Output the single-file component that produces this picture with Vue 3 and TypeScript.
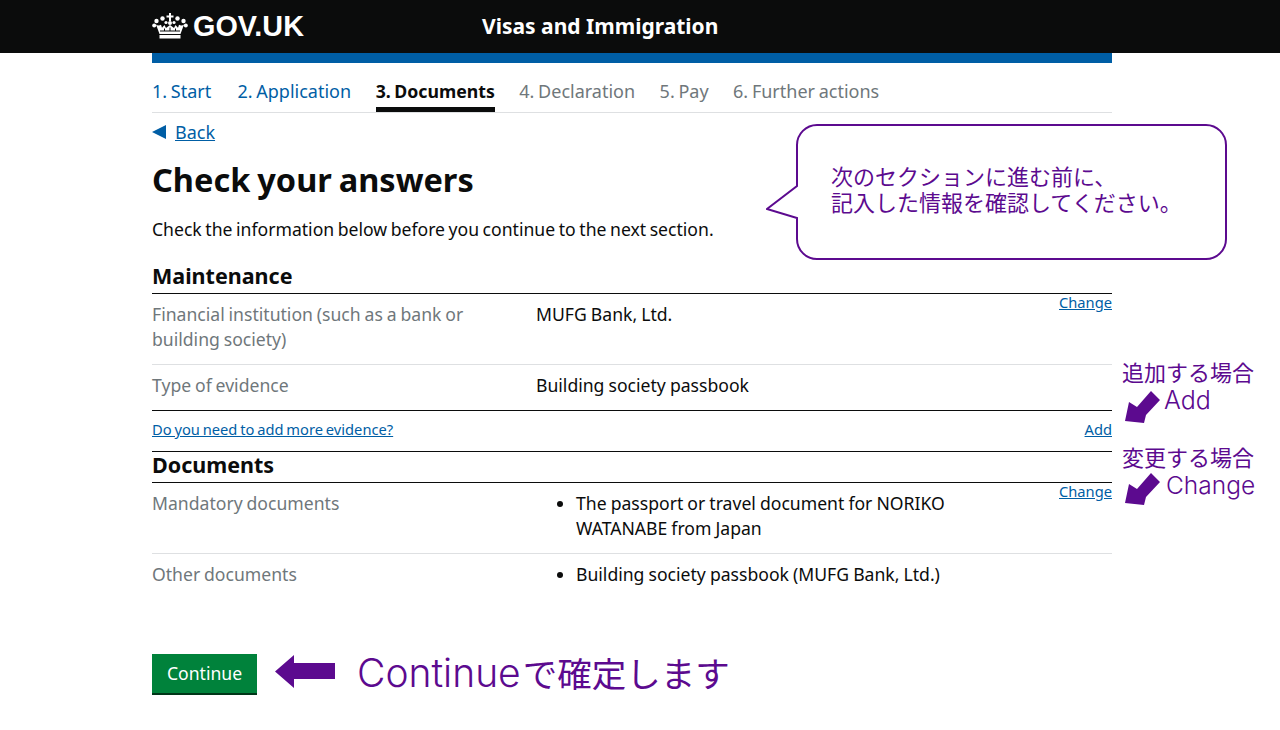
<script setup lang="ts">
const tabs = [
  { label: '1. Start', state: 'done' },
  { label: '2. Application', state: 'done' },
  { label: '3. Documents', state: 'current' },
  { label: '4. Declaration', state: 'todo' },
  { label: '5. Pay', state: 'todo' },
  { label: '6. Further actions', state: 'todo' },
]
</script>

<template>
  <div class="page">
    <header class="top">
      <div class="top-inner">
        <div class="logo">
          <svg class="crown" viewBox="0 0 36 26" width="36" height="26" aria-hidden="true">
            <g fill="#fff">
              <path d="M17 0h2v2.500h2.500v2H19V8h-2V4.500h-2.500v-2H17z" />
              <circle cx="10.500" cy="5.500" r="2.200" /><circle cx="25.500" cy="5.500" r="2.200" />
              <circle cx="4.500" cy="8" r="2.200" /><circle cx="31.500" cy="8" r="2.200" />
              <circle cx="14" cy="9.500" r="1.600" /><circle cx="22" cy="9.500" r="1.600" />
              <circle cx="18" cy="10" r="2" />
              <circle cx="2.200" cy="12.500" r="2" /><circle cx="33.800" cy="12.500" r="2" />
              <path d="M4 11.500c1.500 1.300 3.500 1.300 5 .2l1 3 2.500-2.600 1.500 2.900 4-3 4 3 1.500-2.900 2.500 2.600 1-3c1.500 1.100 3.500 1.100 5-.2l-3.500 9.500h-21z" />
              <path d="M7.500 22h21v3.500h-21z" />
            </g>
            <path d="M8 18h20M12.500 15.500v2.500M18 14.500v3.500M23.500 15.500v2.500" stroke="#0b0c0c" stroke-width="1" fill="none" />
          </svg>
          <span class="wordmark">GOV.UK</span>
        </div>
        <div class="service">Visas and Immigration</div>
      </div>
    </header>

    <main class="wrap">
      <div class="blue-bar"></div>

      <nav class="tabs">
        <span v-for="t in tabs" :key="t.label" class="tab" :class="t.state">{{ t.label }}</span>
      </nav>

      <a class="back" href="#"><svg class="back-arrow" viewBox="0 0 14 14" width="14" height="14" aria-hidden="true"><path d="M14 0v14L0 7z" fill="#005ea5" /></svg><span class="link">Back</span></a>

      <h1 class="title">Check your answers</h1>
      <p class="lead">Check the information below before you continue to the next section.</p>

      <h2 class="section">Maintenance</h2>
      <div class="row first">
        <div class="key">Financial institution (such as a bank or building society)</div>
        <div class="val">MUFG Bank, Ltd.</div>
        <a class="small link action" href="#">Change</a>
      </div>
      <div class="row last">
        <div class="key">Type of evidence</div>
        <div class="val">Building society passbook</div>
      </div>
      <div class="more">
        <a class="small link" href="#">Do you need to add more evidence?</a>
        <a class="small link" href="#">Add</a>
      </div>

      <h2 class="section docs">Documents</h2>
      <div class="row first">
        <div class="key">Mandatory documents</div>
        <ul class="val list"><li>The passport or travel document for NORIKO WATANABE from Japan</li></ul>
        <a class="small link action" href="#">Change</a>
      </div>
      <div class="row plain">
        <div class="key">Other documents</div>
        <ul class="val list"><li>Building society passbook (MUFG Bank, Ltd.)</li></ul>
      </div>

      <button class="continue" type="button">Continue</button>
    </main>

    <!-- Annotations laid over the captured page -->
    <svg class="bubble" viewBox="0 0 462 138" width="462" height="138" aria-hidden="true">
      <path d="M51 2H440a20 20 0 0 1 20 20V116a20 20 0 0 1-20 20H51a20 20 0 0 1-20-20V95L1 86 31 63V22a20 20 0 0 1 20-20z" fill="#fff" stroke="#5c0a8f" stroke-width="2" />
    </svg>
    <div class="bubble-text">次のセクションに進む前に、<br />記入した情報を確認してください。</div>

    <div class="note n1">追加する場合</div>
    <svg class="arrow a1" viewBox="0 0 36 34" width="36" height="34" aria-hidden="true"><path d="M0 31 4 12l8 5L26 1l9 9-14 15-2 8z" fill="#5c0a8f" /></svg>
    <div class="note latin l1">Add</div>

    <div class="note n2">変更する場合</div>
    <svg class="arrow a2" viewBox="0 0 36 34" width="36" height="34" aria-hidden="true"><path d="M0 31 4 12l8 5L26 1l9 9-14 15-2 8z" fill="#5c0a8f" /></svg>
    <div class="note latin l2">Change</div>

    <svg class="arrow a3" viewBox="0 0 60 33" width="60" height="33" aria-hidden="true"><path d="M0 16.500 19 0V8H60V24H19V33z" fill="#5c0a8f" /></svg>
    <div class="big"><span class="big-latin">Continue</span>で確定します</div>
  </div>
</template>

<style>
html, body { margin: 0; background: #fff; }
</style>

<style scoped>
.page {
  position: relative;
  width: 1280px;
  height: 730px;
  overflow: hidden;
  font-family: "Noto Sans", "Liberation Sans", sans-serif;
  color: #0b0c0c;
  background: #fff;
}
.top { height: 53px; background: #0b0c0c; color: #fff; }
.top-inner { margin-left: 152px; width: 960px; height: 53px; display: flex; align-items: center; }
.logo { display: flex; align-items: center; gap: 5px; width: 330px; }
.crown { flex: none; }
.wordmark { font-family: "Liberation Sans", sans-serif; font-weight: 700; font-size: 28.800px; line-height: 1; }
.service { font-weight: 700; font-size: 21px; margin-top: -2px; }
.wrap { margin-left: 152px; width: 960px; }
.blue-bar { height: 10px; background: #005ea5; }
.tabs { display: flex; gap: 24.500px; height: 50px; border-bottom: 1px solid #dee0e2; box-sizing: border-box; }
.tab { font-size: 18px; line-height: 25px; word-spacing: -1px; padding-top: 16px; box-sizing: border-box; height: 49px; }
.tab:first-child { min-width: 61px; }
.tab.done { color: #005ea5; }
.tab.todo { color: #6f777b; }
.tab.current { font-size: 17.700px; font-weight: 700; border-bottom: 5px solid #0b0c0c; }
.back { display: flex; align-items: center; margin-top: 6px; height: 25px; font-size: 18px; color: #005ea5; text-decoration: none; }
.back-arrow { margin-right: 9px; }
.link { color: #005ea5; text-decoration: underline; }
.title { margin: 14px 0 0; font-size: 32.500px; word-spacing: -1.500px; line-height: 44px; font-weight: 700; }
.lead { margin: 15px 0 0; font-size: 17.600px; line-height: 25px; word-spacing: -1px; }
.section { margin: 21px 0 0; font-size: 21.500px; line-height: 25px; font-weight: 700; border-bottom: 1px solid #0b0c0c; height: 31px; box-sizing: border-box; }
.section.docs { margin-top: 0; }
.row { position: relative; display: flex; font-size: 17.600px; word-spacing: -0.700px; line-height: 25px; padding: 8px 0 12px; border-bottom: 1px solid #dee0e2; }
.row.last { border-bottom-color: #0b0c0c; }
.row.plain { border-bottom: 0; }
.key { width: 384px; padding-right: 40px; box-sizing: border-box; color: #6f777b; flex: none; }
.val { flex: 1; padding-right: 120px; margin: 0; box-sizing: border-box; word-spacing: -0.500px; }
.list { padding-left: 40px; padding-right: 120px; }
.small { font-size: 14.700px; word-spacing: -1px; line-height: 20px; }
.action { position: absolute; right: 0; top: -2px; }
.more { display: flex; justify-content: space-between; align-items: center; height: 36px; padding-bottom: 4px; border-bottom: 1px solid #0b0c0c; }
.continue { display: block; margin-top: 55px; width: 105px; height: 41px; background: #00823b; color: #fff; border: 0; border-bottom: 2px solid #003618; font-family: inherit; font-size: 17.600px; padding: 0 0 2px; }

.bubble { position: absolute; left: 766px; top: 123px; }
.bubble-text, .note, .big { font-family: "Noto Sans CJK JP", sans-serif; color: #5c0a8f; font-weight: 400; position: absolute; white-space: nowrap; }
.bubble-text { left: 831px; top: 162px; font-size: 22px; line-height: 26px; }
.note { font-size: 22px; line-height: 26px; }
.n1 { left: 1122px; top: 358px; }
.n2 { left: 1122px; top: 443px; }
.l1 { left: 1164px; top: 387px; font-family: "Inter", sans-serif; font-weight: 300; font-size: 25px; }
.l2 { left: 1166px; top: 472px; font-family: "Inter", sans-serif; font-weight: 300; font-size: 24.500px; }
.arrow { position: absolute; }
.a1 { left: 1125px; top: 390px; }
.a2 { left: 1125px; top: 472px; }
.a3 { left: 275px; top: 655px; }
.big { left: 357px; top: 649px; font-size: 34.500px; line-height: 46px; }
.big-latin { font-family: "Inter", sans-serif; font-weight: 300; font-size: 39px; margin-right: 2px; }
</style>
